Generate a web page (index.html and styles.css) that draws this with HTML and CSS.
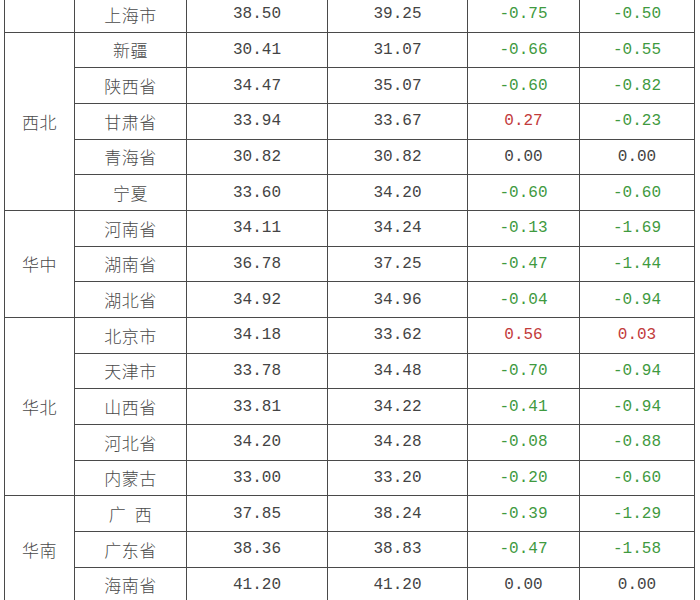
FILE: index.html
```html
<!DOCTYPE html>
<html lang="zh">
<head>
<meta charset="utf-8">
<link rel="stylesheet" href="styles.css">
</head>
<body>
<div class="wrap">
<table class="price">
<colgroup>
<col class="c-region"><col class="c-prov"><col class="c-val"><col class="c-val2"><col class="c-chg"><col class="c-chg2">
</colgroup>
<tbody>
<tr><td class="region"></td><td class="prov">上海市</td><td class="num">38.50</td><td class="num">39.25</td><td class="num down">-0.75</td><td class="num down">-0.50</td></tr>
<tr><td class="region" rowspan="5">西北</td><td class="prov">新疆</td><td class="num">30.41</td><td class="num">31.07</td><td class="num down">-0.66</td><td class="num down">-0.55</td></tr>
<tr><td class="prov">陕西省</td><td class="num">34.47</td><td class="num">35.07</td><td class="num down">-0.60</td><td class="num down">-0.82</td></tr>
<tr><td class="prov">甘肃省</td><td class="num">33.94</td><td class="num">33.67</td><td class="num up">0.27</td><td class="num down">-0.23</td></tr>
<tr><td class="prov">青海省</td><td class="num">30.82</td><td class="num">30.82</td><td class="num">0.00</td><td class="num">0.00</td></tr>
<tr><td class="prov">宁夏</td><td class="num">33.60</td><td class="num">34.20</td><td class="num down">-0.60</td><td class="num down">-0.60</td></tr>
<tr><td class="region" rowspan="3">华中</td><td class="prov">河南省</td><td class="num">34.11</td><td class="num">34.24</td><td class="num down">-0.13</td><td class="num down">-1.69</td></tr>
<tr><td class="prov">湖南省</td><td class="num">36.78</td><td class="num">37.25</td><td class="num down">-0.47</td><td class="num down">-1.44</td></tr>
<tr><td class="prov">湖北省</td><td class="num">34.92</td><td class="num">34.96</td><td class="num down">-0.04</td><td class="num down">-0.94</td></tr>
<tr><td class="region" rowspan="5">华北</td><td class="prov">北京市</td><td class="num">34.18</td><td class="num">33.62</td><td class="num up">0.56</td><td class="num up">0.03</td></tr>
<tr><td class="prov">天津市</td><td class="num">33.78</td><td class="num">34.48</td><td class="num down">-0.70</td><td class="num down">-0.94</td></tr>
<tr><td class="prov">山西省</td><td class="num">33.81</td><td class="num">34.22</td><td class="num down">-0.41</td><td class="num down">-0.94</td></tr>
<tr><td class="prov">河北省</td><td class="num">34.20</td><td class="num">34.28</td><td class="num down">-0.08</td><td class="num down">-0.88</td></tr>
<tr><td class="prov">内蒙古</td><td class="num">33.00</td><td class="num">33.20</td><td class="num down">-0.20</td><td class="num down">-0.60</td></tr>
<tr><td class="region" rowspan="3">华南</td><td class="prov">广&nbsp;&nbsp;西</td><td class="num">37.85</td><td class="num">38.24</td><td class="num down">-0.39</td><td class="num down">-1.29</td></tr>
<tr><td class="prov">广东省</td><td class="num">38.36</td><td class="num">38.83</td><td class="num down">-0.47</td><td class="num down">-1.58</td></tr>
<tr><td class="prov">海南省</td><td class="num">41.20</td><td class="num">41.20</td><td class="num">0.00</td><td class="num">0.00</td></tr>
</tbody>
</table>
</div>
</body>
</html>
```
FILE: styles.css
```css
html, body {
  margin: 0;
  padding: 0;
  background: #ffffff;
}
.wrap {
  width: 700px;
  height: 600px;
  overflow: hidden;
}
.price {
  border-collapse: collapse;
  table-layout: fixed;
  width: 690px;
  margin: -4px 0 0 4px;
  color: #444444;
}
.c-region { width: 70px; }
.c-prov { width: 112px; }
.c-val { width: 141px; }
.c-val2 { width: 140px; }
.c-chg { width: 112px; }
.c-chg2 { width: 115px; }
.price tr {
  height: 35.67px;
}
.price td {
  border: 1px solid #4a4a4a;
  padding: 0;
  text-align: center;
  vertical-align: middle;
}
.region, .prov {
  font-family: "Noto Sans CJK SC", "Noto Sans", sans-serif;
  font-size: 17px;
  font-weight: 300;
  letter-spacing: 0.5px;
  color: #4a4a4a;
}
.num {
  font-family: "Liberation Mono", "DejaVu Sans Mono", monospace;
  font-size: 16px;
}
.down { color: #3f9a3f; }
.up { color: #c23b3b; }
```
